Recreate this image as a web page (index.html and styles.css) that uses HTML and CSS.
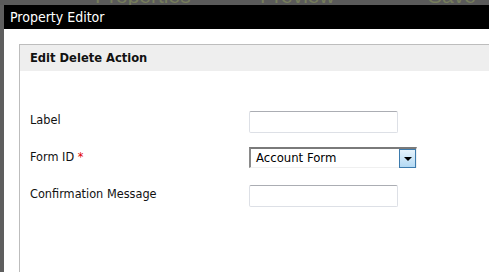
FILE: index.html
```html
<!DOCTYPE html>
<html>
<head>
<meta charset="utf-8">
<link rel="stylesheet" href="styles.css">
</head>
<body>
<div class="backdrop">
  <span class="tab t1">Properties</span>
  <span class="tab t2">Preview</span>
  <span class="tab t3">Save</span>
</div>
<div class="main">
  <div class="left-strip"></div>
  <div class="dialog">
    <div class="titlebar">Property Editor</div>
    <div class="content">
      <div class="panel">
        <div class="panel-header">Edit Delete Action</div>
        <div class="form">
          <div class="label">Label</div>
          <div class="field"><div class="input"></div></div>
          <div class="label">Form ID <span class="req">*</span></div>
          <div class="field">
            <div class="select">
              <span class="select-text">Account Form</span>
              <span class="select-btn"><span class="arrow"></span></span>
            </div>
          </div>
          <div class="label">Confirmation Message</div>
          <div class="field"><div class="input"></div></div>
        </div>
      </div>
    </div>
  </div>
</div>
</body>
</html>
```

FILE: styles.css
```css
html, body {
  margin: 0;
  padding: 0;
  width: 489px;
  height: 272px;
  overflow: hidden;
  background: #5c5c5c;
  font-family: "DejaVu Sans Condensed", "DejaVu Sans", sans-serif;
}
.backdrop {
  height: 5px;
  position: relative;
  overflow: hidden;
  background: #5a5a5a;
}
.tab {
  position: absolute;
  top: -15px;
  font-size: 21px;
  line-height: 21px;
  color: #767d5c;
  font-family: "Liberation Sans", sans-serif;
}
.t1 { left: 95px; }
.t2 { left: 260px; }
.t3 { left: 428px; }
.main {
  display: flex;
  height: 267px;
  overflow: hidden;
}
.left-strip {
  width: 4px;
  background: #5e5e5e;
  flex: none;
}
.dialog {
  flex: 1;
  background: #fff;
  display: flex;
  flex-direction: column;
}
.titlebar {
  height: 24px;
  background: #000;
  color: #fff;
  font-size: 14px;
  line-height: 25px;
  padding-left: 6px;
}
.content {
  padding: 15px 0 0 15px;
  flex: 1;
}
.panel {
  border: 1px solid #bdbdbd;
  border-right: none;
  height: 300px;
}
.panel-header {
  height: 26px;
  line-height: 26px;
  background: #eeeeee;
  padding-left: 10px;
  font-weight: bold;
  font-size: 12.8px;
  color: #111;
}
.form {
  display: grid;
  grid-template-columns: 219px 1fr;
  row-gap: 15px;
  padding: 40px 0 0 10px;
  font-size: 12.6px;
  color: #111;
}
.label {
  height: 22px;
  line-height: 18px;
}
.req {
  color: #e00000;
}
.field {
  height: 22px;
}
.input {
  width: 147px;
  height: 20px;
  border: 1px solid #dde0e6;
  border-top-color: #abadb3;
  border-radius: 2px;
}
.select {
  box-sizing: border-box;
  width: 168px;
  height: 21px;
  margin-top: -1px;
  border-top: 2px solid #7a7a7a;
  border-left: 2px solid #8a8a8a;
  border-bottom: 1px solid #f0f0f0;
  border-right: 1px solid #f0f0f0;
  display: flex;
  align-items: center;
  justify-content: space-between;
}
.select-text {
  padding-left: 5px;
  font-size: 13px;
  line-height: 18px;
  color: #000;
}
.select-btn {
  box-sizing: border-box;
  width: 17px;
  height: 19px;
  border: 1px solid #3d7bad;
  background: linear-gradient(#e6f3fc, #b3d9f3);
  display: flex;
  align-items: center;
  justify-content: center;
}
.arrow {
  width: 0;
  height: 0;
  border-left: 4px solid transparent;
  border-right: 4px solid transparent;
  border-top: 4px solid #000;
  margin-top: 1px;
}
```
